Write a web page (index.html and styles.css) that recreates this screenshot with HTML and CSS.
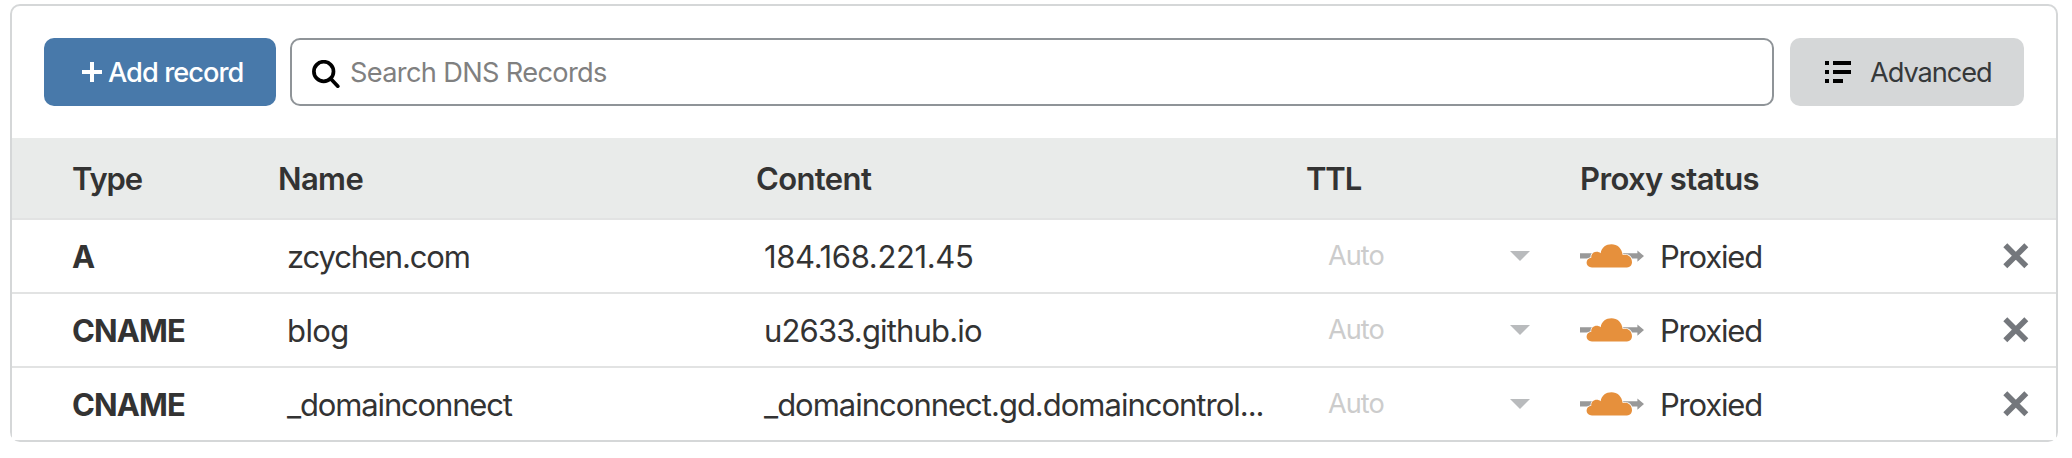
FILE: index.html
```html
<!DOCTYPE html>
<html lang="en">
<head>
<meta charset="utf-8">
<title>DNS Records</title>
<link rel="stylesheet" href="styles.css">
</head>
<body>
<svg class="sprite" aria-hidden="true">
  <symbol id="proxy-cloud" viewBox="0 0 64 28">
    <path fill="#999" d="M0 11.3H57.4V8.5L64 14.1 57.4 19.8V16.5H0Z"/>
    <path fill="#e6903c" stroke="#fff" stroke-width="1.6" paint-order="stroke" d="M12 25.4C8.800 25.400 6.600 23.200 6.600 20.500C6.600 17.900 8.500 16.200 11.300 15.800C10.800 12 13.600 9.800 16.700 9.800C18.300 9.800 19.600 10.300 20.700 11.300C21.300 5.600 26 2.300 31.500 2.300C37.200 2.300 42 6.300 42.700 13.100C44.300 12.600 46.200 12.500 47.800 13.200C50.600 14.400 52 17.300 52 20.300C51.900 23.300 50 25.400 47 25.400Z"/>
  </symbol>
  <symbol id="delete" viewBox="0 0 26 26">
    <path fill="none" stroke="#74777c" stroke-width="5.600" d="M2.300 2.300 23.300 23.300M23.300 2.300 2.300 23.300"/>
  </symbol>
</svg>
<main class="card">
  <div class="toolbar">
    <button class="btn btn-primary" type="button">
      <svg class="icon-plus" viewBox="0 0 20 20"><path d="M8 0h4v8h8v4h-8v8H8v-8H0V8h8Z" fill="#fff"/></svg>
      <span class="label">Add record</span>
    </button>
    <div class="search">
      <svg class="icon-search" viewBox="0 0 28 28" fill="none" stroke="#000" stroke-width="3.700"><circle cx="11.700" cy="11.500" r="9.800"/><path d="M18.500 18.500 25.800 26.200" stroke-linecap="round" stroke-width="3.700"/></svg>
      <span class="label">Search DNS Records</span>
    </div>
    <button class="btn btn-secondary" type="button">
      <svg class="icon-list" viewBox="0 0 26 22"><path d="M0 0h4v4H0ZM8 0h18v4H8ZM0 9h4v4H0ZM8 9h18v4H8ZM0 18h4v4H0ZM8 18h10v4H8Z"/></svg>
      <span class="label">Advanced</span>
    </button>
  </div>
  <div class="row head">
    <span class="tight">Type</span><span class="head-name">Name</span><span>Content</span><span class="tight">TTL</span><span>Proxy status</span>
  </div>
  <div class="row">
    <span class="type">A</span>
    <span class="name">zcychen.com</span>
    <span class="content ip">184.168.221.45</span>
    <span class="ttl">Auto<i class="caret"></i></span>
    <span class="proxy"><svg class="cloud"><use href="#proxy-cloud"/></svg>Proxied</span>
    <svg class="delete"><use href="#delete"/></svg>
  </div>
  <div class="row">
    <span class="type">CNAME</span>
    <span class="name loose">blog</span>
    <span class="content host">u2633.github.io</span>
    <span class="ttl">Auto<i class="caret"></i></span>
    <span class="proxy"><svg class="cloud"><use href="#proxy-cloud"/></svg>Proxied</span>
    <svg class="delete"><use href="#delete"/></svg>
  </div>
  <div class="row">
    <span class="type">CNAME</span>
    <span class="name">_domainconnect</span>
    <span class="content">_domainconnect.gd.domaincontrol...</span>
    <span class="ttl">Auto<i class="caret"></i></span>
    <span class="proxy"><svg class="cloud"><use href="#proxy-cloud"/></svg>Proxied</span>
    <svg class="delete"><use href="#delete"/></svg>
  </div>
</main>
</body>
</html>
```
FILE: styles.css
```css
* { box-sizing: border-box; }
body {
  margin: 0;
  padding: 4px 14px 0 10px;
  background: #fff;
  color: #333;
  font: 400 31px/40px Inter, "Liberation Sans", sans-serif;
  white-space: nowrap;
}
.sprite { display: block; width: 0; height: 0; }
.card {
  height: 438px;
  border: 2px solid #d5d7d8;
  border-radius: 10px;
}
.toolbar {
  display: flex;
  height: 132px;
  padding: 32px;
  font-size: 27.2px;
}
.label { padding-top: 2px; }
.btn {
  display: flex;
  align-items: center;
  height: 68px;
  border: 0;
  border-radius: 10px;
  font: inherit;
}
.btn-primary {
  width: 232px;
  margin-right: 14px;
  padding: 0 0 0 38px;
  gap: 6px;
  background: #4879aa;
  color: #fff;
  font-weight: 500;
  letter-spacing: -0.94px;
}
.icon-plus { width: 20px; height: 20px; }
.search {
  flex: 1;
  display: flex;
  align-items: center;
  gap: 10px;
  height: 68px;
  padding-left: 20px;
  border: 2px solid #8f9498;
  border-radius: 10px;
  color: #808080;
  letter-spacing: -0.66px;
}
.icon-search { width: 28px; height: 28px; margin-top: 3px; }
.btn-secondary {
  width: 234px;
  margin-left: 16px;
  padding: 0 0 0 35px;
  gap: 19px;
  background: #d5d7d8;
  color: #36393a;
  letter-spacing: -1.06px;
}
.icon-list { width: 26px; height: 22px; }
.row {
  display: grid;
  grid-template-columns: 205px 479px 550px 274px 423px 26px;
  align-items: center;
  height: 74px;
  padding: 2px 0 0 60px;
  border-bottom: 2px solid #e2e3e3;
  background: #fff;
  letter-spacing: -1px;
}
.row:last-child { height: 72px; border-bottom: 0; }
.head {
  height: 82px;
  padding-top: 1px;
  background: #e9ebea;
  font-weight: 600;
  letter-spacing: -0.62px;
}
.head-name { padding-left: 1px; }
.tight { letter-spacing: -1.1px; }
.type { font-weight: 700; letter-spacing: -0.9px; }
.name { padding-left: 10px; letter-spacing: -1.15px; }
.loose { letter-spacing: -0.6px; }
.content { padding-left: 8px; }
.ip { letter-spacing: -0.36px; }
.host { letter-spacing: -0.84px; }
.ttl {
  display: flex;
  align-items: center;
  justify-content: space-between;
  padding: 0 50px 3px 22px;
  color: #ccc;
  font-size: 27.2px;
}
.caret {
  border: 10px solid transparent;
  border-top-color: #b9bbbd;
  border-bottom: 0;
}
.proxy { display: flex; align-items: center; letter-spacing: -1.2px; }
.cloud { width: 64px; height: 28px; margin: 0 16px 2px 0; }
.delete { width: 26px; height: 26px; margin-bottom: 2px; }
```
